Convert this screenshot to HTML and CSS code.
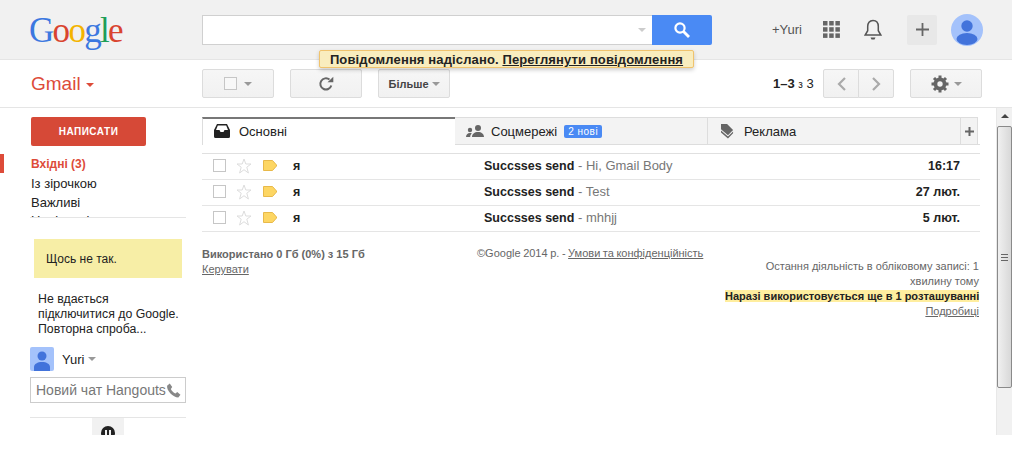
FILE: index.html
```html
<!DOCTYPE html>
<html>
<head>
    <title>Gmail</title>
    <meta charset="UTF-8">
    <link rel="stylesheet" href="styles.css">
</head>
<body>
<div id="wrapper">
    <div id="topbar">
        <div id="logo"><span class="blue">G</span><span class="red">o</span><span class="yellow">o</span><span class="blue">g</span><span class="green">l</span><span class="red">e</span></div>
        <div id="searchBox"><span class="caret searchCaret"></span></div>
        <div id="searchBtn">
            <svg width="18" height="18" viewBox="0 0 18 18"><circle cx="7" cy="7" r="4.6" fill="none" stroke="#fff" stroke-width="2.2"/><path d="M10.5 10.5L16 16" stroke="#fff" stroke-width="2.8"/></svg>
        </div>
        <div id="userName">+Yuri</div>
        <div id="appsGrid">
            <svg width="17" height="17" viewBox="0 0 17 17" fill="#666"><rect width="4.5" height="4.5"/><rect x="6.2" width="4.5" height="4.5"/><rect x="12.4" width="4.5" height="4.5"/><rect y="6.2" width="4.5" height="4.5"/><rect x="6.2" y="6.2" width="4.5" height="4.5"/><rect x="12.4" y="6.2" width="4.5" height="4.5"/><rect y="12.4" width="4.5" height="4.5"/><rect x="6.2" y="12.4" width="4.5" height="4.5"/><rect x="12.4" y="12.4" width="4.5" height="4.5"/></svg>
        </div>
        <div id="bell">
            <svg width="18" height="21" viewBox="0 0 18 21"><path d="M9 1.5c-3.6 0-5.3 2.8-5.3 6v4.2L1.2 16h15.6l-2.5-4.300V7.500c0-3.200-1.700-6-5.300-6z" fill="none" stroke="#555" stroke-width="1.5"/><path d="M6.5 18.500h5l-1 2h-3z" fill="#555"/></svg>
        </div>
        <div id="shareBtn">
            <svg width="13" height="13" viewBox="0 0 13 13"><path d="M6.5 0v13M0 6.5h13" stroke="#666" stroke-width="1.8"/></svg>
        </div>
        <div id="avatar">
            <svg width="32" height="32" viewBox="0 0 32 32"><circle cx="16" cy="16" r="16" fill="#a4c2fb"/><circle cx="16" cy="12" r="5.7" fill="#4273db"/><ellipse cx="16" cy="25" rx="10.5" ry="6" fill="#4273db"/></svg>
        </div>
    </div>

    <div id="toast">Повідомлення надіслано. <a>Переглянути повідомлення</a></div>

    <div id="toolbar">
        <div id="gmailLabel">Gmail<span class="caret redCaret"></span></div>
        <div class="tbBtn selectBtn"><span class="bigCheck"></span><span class="caret"></span></div>
        <div class="tbBtn refreshBtn">
            <svg width="16" height="16" viewBox="0 0 16 16"><path d="M13.3 9.5A5.600 5.600 0 1 1 11.500 3.600" fill="none" stroke="#666" stroke-width="2"/><path d="M9.500 6.300h5.800V.8z" fill="#666"/></svg>
        </div>
        <div class="tbBtn moreBtn">Більше<span class="caret"></span></div>
        <div id="pageCount"><b>1–3</b> <small>з</small> 3</div>
        <div class="tbBtn pagerBtn leftBtn">
            <svg width="9" height="14" viewBox="0 0 9 14"><path d="M8 1L2 7l6 6" fill="none" stroke="#aaa" stroke-width="2.2"/></svg>
        </div>
        <div class="tbBtn pagerBtn rightBtn">
            <svg width="9" height="14" viewBox="0 0 9 14"><path d="M1 1l6 6-6 6" fill="none" stroke="#aaa" stroke-width="2.2"/></svg>
        </div>
        <div class="tbBtn settingsBtn">
            <svg width="18" height="18" viewBox="0 0 18 18"><circle cx="9" cy="9" r="4.8" fill="none" stroke="#666" stroke-width="3.4"/><path d="M9 .5v17M.5 9h17M3 3l12 12M15 3L3 15" stroke="#666" stroke-width="3"/><circle cx="9" cy="9" r="2.7" fill="#f3f3f3"/></svg>
            <span class="caret"></span>
        </div>
    </div>

    <div id="content">
        <div id="sidebar">
            <div id="composeBtn">НАПИСАТИ</div>
            <div id="navList">
                <div class="navItem activeItem">Вхідні (3)</div>
                <div class="navItem">Із зірочкою</div>
                <div class="navItem">Важливі</div>
                <div class="navItem">Надіслані</div>
            </div>
            <div id="chatPanel">
                <div id="chatError">Щось не так.</div>
                <div id="chatRetry">Не вдається<br />підключитися до Google.<br />Повторна спроба...</div>
                <div id="chatUser">
                    <svg width="24" height="24" viewBox="0 0 24 24"><rect width="24" height="24" rx="2" fill="#a4c2fb"/><circle cx="12" cy="9" r="4.5" fill="#4273db"/><path d="M4 24v-4c0-3 3.500-5 8-5s8 2 8 5v4z" fill="#4273db"/></svg>
                    <span>Yuri</span><span class="caret"></span>
                </div>
                <div id="chatInput"><span>Новий чат Hangouts</span>
                    <svg width="15" height="15" viewBox="0 0 14 14"><path d="M3.500.5L1 2.500C.5 7 6.500 13.500 11.500 13.500l2-2.500-3-2.500-1.700 1.300C7 9 5 7 4.500 5.500L5.800 3.700z" fill="#888"/></svg>
                </div>
                <div id="chatTabs">
                    <div id="chatTab">
                        <svg class="chatTabIcon" width="14" height="14" viewBox="0 0 14 14"><circle cx="7" cy="7" r="7" fill="#222"/><path d="M4 4h2v5H4zM8 4h2v5H8z" fill="#f1f1f1"/></svg>
                    </div>
                </div>
            </div>
        </div>

        <div id="main">
            <div id="tabs">
                <div class="tab activeTab">
                    <svg width="16" height="14" viewBox="0 0 16 14"><path d="M3 0h10l3 6v6.500a1.500 1.500 0 0 1-1.500 1.500h-13A1.500 1.500 0 0 1 0 12.500V6z" fill="#222"/><path d="M3.800 1.500h8.400L14 6h-3.500l-1 2h-3l-1-2H2z" fill="#fff"/></svg>
                    Основні
                </div>
                <div class="tab socialTab">
                    <svg width="18" height="12" viewBox="0 0 18 12" fill="#666"><circle cx="12" cy="3" r="3"/><circle cx="4" cy="5" r="2.2"/><path d="M6 12c0-3 2.500-5 6-5s6 2 6 5zM0 12c0-2 1.500-4 4-4 .7 0 1.300.1 1.800.4C4.700 9.300 4.200 10.500 4.200 12z"/></svg>
                    Соцмережі <span id="newBadge">2 нові</span>
                </div>
                <div class="tab promoTab">
                    <svg width="13" height="15" viewBox="0 0 14 16" fill="#666"><path d="M0 0h6.500L13 6.500 7.500 12 0 5.500z"/><path d="M0 7l7.500 6.500L13 8v2l-5.500 5.500L0 9z"/></svg>
                    Реклама
                </div>
                <div class="tabPlus">
                    <svg width="9" height="9" viewBox="0 0 9 9"><path d="M4.500 0v9M0 4.500h9" stroke="#666" stroke-width="2"/></svg>
                </div>
            </div>

            <div id="mailList">
                <div class="mailRow">
                    <span class="rowCheck"></span>
                    <svg class="star" width="16" height="16" viewBox="0 0 16 16"><path d="M8 1l1.800 5H15l-4.200 3.200L12.400 15 8 11.700 3.600 15l1.600-5.800L1 6h5.200z" fill="none" stroke="#ddd"/></svg>
                    <svg class="marker" width="14" height="11" viewBox="0 0 14 11"><path d="M.5.500h9l4 4.500v1l-4 4.500h-9z" fill="#fdd663" stroke="#e8b94a"/></svg>
                    <span class="sender">я</span>
                    <span class="subject"><b>Succsses send</b> - Hi, Gmail Body</span>
                    <span class="mailDate">16:17</span>
                </div>
                <div class="mailRow">
                    <span class="rowCheck"></span>
                    <svg class="star" width="16" height="16" viewBox="0 0 16 16"><path d="M8 1l1.800 5H15l-4.200 3.200L12.400 15 8 11.700 3.600 15l1.600-5.800L1 6h5.200z" fill="none" stroke="#ddd"/></svg>
                    <svg class="marker" width="14" height="11" viewBox="0 0 14 11"><path d="M.5.500h9l4 4.500v1l-4 4.500h-9z" fill="#fdd663" stroke="#e8b94a"/></svg>
                    <span class="sender">я</span>
                    <span class="subject"><b>Succsses send</b> - Test</span>
                    <span class="mailDate">27 лют.</span>
                </div>
                <div class="mailRow">
                    <span class="rowCheck"></span>
                    <svg class="star" width="16" height="16" viewBox="0 0 16 16"><path d="M8 1l1.800 5H15l-4.200 3.200L12.400 15 8 11.700 3.600 15l1.600-5.800L1 6h5.200z" fill="none" stroke="#ddd"/></svg>
                    <svg class="marker" width="14" height="11" viewBox="0 0 14 11"><path d="M.5.500h9l4 4.500v1l-4 4.500h-9z" fill="#fdd663" stroke="#e8b94a"/></svg>
                    <span class="sender">я</span>
                    <span class="subject"><b>Succsses send</b> - mhhjj</span>
                    <span class="mailDate">5 лют.</span>
                </div>
            </div>

            <div id="footer">
                <div class="footLeft"><b>Використано 0 Гб (0%) з 15 Гб</b><br /><a>Керувати</a></div>
                <div class="footMid">©Google 2014 р. - <a>Умови та конфіденційність</a></div>
                <div class="footRight">
                    Остання діяльність в обліковому записі: 1<br />хвилину тому<br />
                    <b>Наразі використовується ще в 1 розташуванні</b><br />
                    <a>Подробиці</a>
                </div>
            </div>
        </div>

        <div id="scrollbar">
            <div class="scrollArrow"></div>
            <div class="scrollThumb"><span></span></div>
        </div>
    </div>
</div>
</body>
</html>
```
FILE: styles.css
```css
html, body {
    margin: 0;
    padding: 0;
    background-color: #fff;
}

#wrapper {
    position: relative;
    width: 1012px;
    height: 435px;
    overflow: hidden;
    font-family: "Liberation Sans", Arial, sans-serif;
    font-size: 12px;
    color: #222;
}

.caret {
    display: inline-block;
    width: 0;
    height: 0;
    border-left: 4px solid transparent;
    border-right: 4px solid transparent;
    border-top: 4px solid #999;
}

/* top grey bar */
#topbar {
    display: flex;
    align-items: center;
    height: 59px;
    background-color: #f1f1f1;
    border-bottom: 1px solid #e5e5e5;
}

#logo {
    width: 202px;
    box-sizing: border-box;
    padding-left: 29px;
    font-family: "Liberation Serif", serif;
    font-size: 35px;
    line-height: 44px;
    letter-spacing: -1.7px;
    margin-top: 2px;
}

.blue { color: #3c78e0; }
.red { color: #d9442f; }
.yellow { color: #f4b400; }
.green { color: #1e9e58; }

#searchBox {
    display: flex;
    align-items: center;
    justify-content: flex-end;
    width: 450px;
    height: 30px;
    box-sizing: border-box;
    background-color: #fff;
    border: 1px solid #d0d0d0;
    border-right: 0;
    padding-right: 6px;
}

.searchCaret {
    border-top-color: #ccc;
}

#searchBtn {
    display: flex;
    align-items: center;
    justify-content: center;
    width: 60px;
    height: 30px;
    background-color: #4a8af4;
    border-radius: 0 2px 2px 0;
}

#userName {
    margin-left: 60px;
    width: 51px;
    color: #555;
    font-size: 13px;
}

#appsGrid {
    display: flex;
    width: 41px;
}

#bell {
    display: flex;
    width: 43px;
}

#shareBtn {
    display: flex;
    align-items: center;
    justify-content: center;
    width: 30px;
    height: 30px;
    background-color: #e8e8e8;
    border-radius: 2px;
}

#avatar {
    display: flex;
    margin-left: 14px;
}

/* message sent notice */
#toast {
    position: absolute;
    left: 319px;
    top: 50px;
    width: 375px;
    height: 18px;
    box-sizing: border-box;
    background-color: #f9edbe;
    border: 1px solid #f0c36d;
    border-radius: 2px;
    box-shadow: 0 2px 4px rgba(0, 0, 0, 0.2);
    font-size: 13px;
    font-weight: bold;
    letter-spacing: 0.13px;
    line-height: 17px;
    text-align: center;
    white-space: nowrap;
    color: #222;
}

#toast a {
    text-decoration: underline;
}

/* second row */
#toolbar {
    display: flex;
    align-items: center;
    height: 47px;
    border-bottom: 1px solid #e5e5e5;
}

#gmailLabel {
    width: 202px;
    box-sizing: border-box;
    padding-left: 31px;
    font-size: 19px;
    color: #dd4b39;
}

.redCaret {
    border-top-color: #dd4b39;
    margin-left: 5px;
    vertical-align: 3px;
}

.tbBtn {
    display: flex;
    align-items: center;
    justify-content: center;
    height: 29px;
    box-sizing: border-box;
    background-color: #f5f5f5;
    background-image: linear-gradient(#f6f6f6, #f1f1f1);
    border: 1px solid #dcdcdc;
    border-radius: 2px;
}

.selectBtn {
    width: 72px;
    gap: 7px;
}

.bigCheck {
    width: 13px;
    height: 13px;
    box-sizing: border-box;
    border: 1px solid #c6c6c6;
    background-color: #f8f8f8;
}

.refreshBtn {
    width: 72px;
    margin-left: 16px;
}

.moreBtn {
    width: 72px;
    margin-left: 16px;
    font-size: 11px;
    font-weight: bold;
    color: #444;
}

.moreBtn .caret {
    margin-left: 3px;
}

#pageCount {
    margin-left: 323px;
    width: 50px;
    font-size: 13px;
    color: #222;
    white-space: nowrap;
}

#pageCount small {
    font-size: 10px;
}

.pagerBtn {
    width: 36px;
}

.leftBtn {
    border-radius: 2px 0 0 2px;
}

.rightBtn {
    margin-left: -1px;
    border-radius: 0 2px 2px 0;
}

.settingsBtn {
    width: 72px;
    margin-left: 16px;
    gap: 5px;
}

/* sidebar + list */
#content {
    display: flex;
    height: 327px;
}

#sidebar {
    width: 202px;
    flex-shrink: 0;
    padding-top: 9px;
    box-sizing: border-box;
}

#composeBtn {
    width: 115px;
    height: 29px;
    margin-left: 31px;
    background-color: #d64937;
    border-radius: 2px;
    color: #fff;
    font-size: 10px;
    font-weight: bold;
    letter-spacing: 0.5px;
    line-height: 30px;
    text-align: center;
}

#navList {
    height: 63px;
    margin-top: 8px;
    overflow: hidden;
}

.navItem {
    height: 18.5px;
    padding-left: 31px;
    font-size: 13px;
    line-height: 21px;
}

.activeItem {
    height: 19px;
    border-left: 4px solid #dd4b39;
    padding-left: 27px;
    color: #dd4b39;
    font-size: 12px;
    font-weight: bold;
}

#chatPanel {
    margin-left: 30px;
    width: 156px;
    border-top: 1px solid #e5e5e5;
}

#chatError {
    margin: 21px 4px 0 4px;
    height: 39px;
    box-sizing: border-box;
    padding-left: 12px;
    background-color: #f7eea6;
    line-height: 41px;
}

#chatRetry {
    margin-top: 14px;
    padding-left: 8px;
    font-size: 12.3px;
    line-height: 15px;
}

#chatUser {
    display: flex;
    align-items: center;
    gap: 8px;
    margin-top: 10px;
    height: 24px;
    font-size: 13px;
}

#chatUser .caret {
    margin-left: -4px;
}

#chatInput {
    display: flex;
    align-items: center;
    height: 26px;
    margin-top: 6px;
    box-sizing: border-box;
    border: 1px solid #ccc;
    padding-left: 5px;
    font-size: 14px;
    color: #777;
    white-space: nowrap;
}

#chatTabs {
    margin-top: 14px;
    height: 18px;
    border-top: 1px solid #e5e5e5;
}

#chatTab {
    width: 32px;
    height: 18px;
    margin-left: 62px;
    background-color: #f1f1f1;
    overflow: hidden;
}

.chatTabIcon {
    display: block;
    margin: 8px auto 0;
}

#main {
    width: 778px;
    flex-shrink: 0;
    padding-top: 9px;
    box-sizing: border-box;
}

#tabs {
    display: flex;
    height: 28px;
    width: 778px;
    box-sizing: border-box;
    border-bottom: 1px solid #ddd;
    padding-right: 2px;
}

.tab {
    display: flex;
    align-items: center;
    width: 253px;
    box-sizing: border-box;
    padding-left: 11px;
    background-color: #f3f3f3;
    border-top: 1px solid #ddd;
    border-right: 1px solid #ddd;
    font-size: 13px;
    color: #222;
    gap: 10px;
}

.activeTab {
    height: 28px;
    padding-bottom: 2px;
    background-color: #fff;
    border-top: 2px solid #777;
    border-left: 1px solid #ddd;
    border-right: 0;
    gap: 9px;
}

.socialTab {
    gap: 7px;
}

.promoTab {
    padding-left: 13px;
    gap: 10px;
}

.tabPlus {
    display: flex;
    align-items: center;
    justify-content: center;
    flex-grow: 1;
    background-color: #f3f3f3;
    border-top: 1px solid #ddd;
    border-right: 1px solid #ddd;
}

#newBadge {
    display: inline-block;
    height: 13px;
    padding: 0 4px;
    background-color: #4a8af4;
    border-radius: 2px;
    color: #fff;
    font-size: 10px;
    letter-spacing: 0.5px;
    line-height: 13px;
}

#mailList {
    margin-top: 8px;
    border-top: 1px solid #e0e0e0;
}

.mailRow {
    display: flex;
    align-items: center;
    height: 26px;
    box-sizing: border-box;
    border-bottom: 1px solid #e5e5e5;
    padding: 0 0 2px 11px;
    font-size: 12.5px;
    white-space: nowrap;
}

.rowCheck {
    width: 13px;
    height: 13px;
    box-sizing: border-box;
    border: 1px solid #c6c6c6;
}

.star {
    margin-left: 10px;
}

.marker {
    margin-left: 11px;
}

.sender {
    width: 191px;
    margin-left: 16px;
    font-weight: bold;
}

.subject {
    flex-grow: 1;
    font-size: 13px;
    color: #777;
}

.subject b {
    font-size: 12.5px;
    color: #222;
}

.mailDate {
    width: 80px;
    padding-right: 20px;
    box-sizing: border-box;
    text-align: right;
    font-weight: bold;
}

#footer {
    display: flex;
    margin-top: 15px;
    font-size: 11px;
    color: #666;
    line-height: 15px;
}

#footer a {
    text-decoration: underline;
}

.footLeft {
    width: 275px;
    flex-shrink: 0;
}

.footMid {
    width: 248px;
    flex-shrink: 0;
    margin-top: -1px;
    word-spacing: -0.5px;
}

.footRight {
    width: 255px;
    padding: 12px 1px 0 0;
    box-sizing: border-box;
    text-align: right;
    white-space: nowrap;
}

.footRight b {
    background-color: #ffee9f;
    color: #222;
}

/* old style scrollbar */
#scrollbar {
    width: 16px;
    margin-left: 16px;
    background-color: #f1f1f1;
    border-left: 1px solid #e8e8e8;
    box-sizing: border-box;
}

.scrollArrow {
    width: 0;
    height: 0;
    margin: 6px auto 8px;
    border-left: 4px solid transparent;
    border-right: 4px solid transparent;
    border-bottom: 4px solid #444;
}

.scrollThumb {
    display: flex;
    align-items: center;
    justify-content: center;
    height: 262px;
    box-sizing: border-box;
    background-image: linear-gradient(to right, #f0f0f0, #d8d8d8);
    border: 1px solid #8a8a8a;
    border-radius: 2px;
}

.scrollThumb span {
    display: block;
    width: 7px;
    height: 7px;
    background-image: repeating-linear-gradient(#666, #666 1px, transparent 1px, transparent 3px);
}
```
